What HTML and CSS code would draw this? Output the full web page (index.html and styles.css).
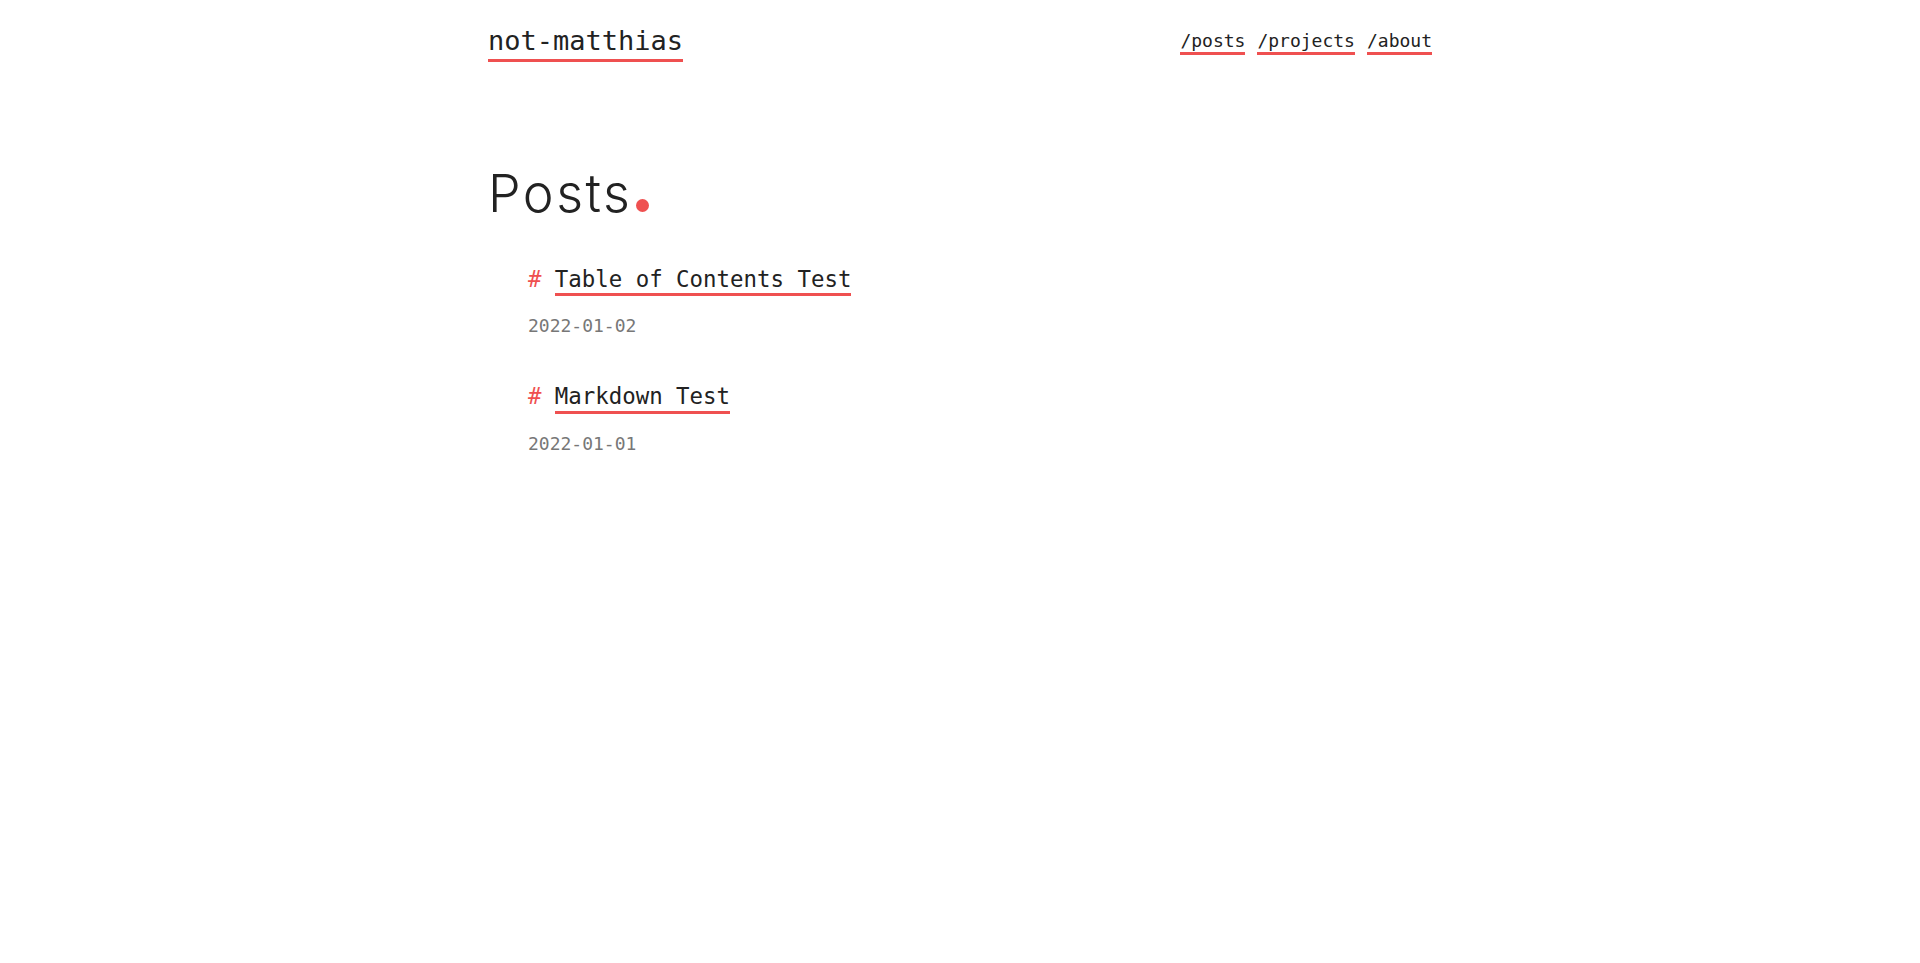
FILE: index.html
```html
<!DOCTYPE html>
<html lang="en">
<head>
<meta charset="utf-8">
<title>Posts | not-matthias</title>
<link rel="stylesheet" href="styles.css">
</head>
<body>
<div class="container">
  <header class="site-header">
    <a class="logo" href="#">not-matthias</a>
    <nav class="nav">
      <a href="#">/posts</a>
      <a href="#">/projects</a>
      <a href="#">/about</a>
    </nav>
  </header>
  <main class="main">
    <h1 class="page-title">Posts<span class="dot"></span></h1>
    <ul class="post-list">
      <li class="post">
        <div class="post-head"><a class="post-title" href="#">Table of Contents Test</a></div>
        <div class="post-date">2022-01-02</div>
      </li>
      <li class="post">
        <div class="post-head"><a class="post-title" href="#">Markdown Test</a></div>
        <div class="post-date">2022-01-01</div>
      </li>
    </ul>
  </main>
</div>
</body>
</html>
```
FILE: styles.css
```css
html, body {
  margin: 0;
  padding: 0;
  background: #ffffff;
}
body {
  font-family: "DejaVu Sans Mono", "Liberation Mono", monospace;
  color: #222222;
}
a {
  color: #222222;
  text-decoration: none;
}
.container {
  width: 944px;
  margin: 0 auto;
}
.site-header {
  display: flex;
  justify-content: space-between;
  align-items: flex-start;
  padding-top: 27px;
}
.logo {
  display: inline-block;
  font-size: 27px;
  line-height: 1;
  padding-bottom: 5px;
  border-bottom: 3px solid #ef5050;
}
.nav {
  display: flex;
  gap: 12px;
  padding-top: 5px;
}
.nav a {
  display: inline-block;
  font-size: 18px;
  line-height: 1;
  padding-bottom: 2px;
  border-bottom: 3px solid #ef5050;
}
.main {
  padding-top: 106px;
}
.page-title {
  margin: 0;
  font-family: Inter, "Noto Sans", sans-serif;
  font-weight: 300;
  font-size: 52px;
  letter-spacing: 2.5px;
  line-height: 1;
  color: #222222;
}
.dot {
  display: inline-block;
  width: 13px;
  height: 13px;
  border-radius: 50%;
  background: #ef5050;
  margin-left: 4px;
}
.post-list {
  list-style: none;
  margin: 47.5px 0 0;
  padding: 0 0 0 40px;
}
.post + .post {
  margin-top: 50.5px;
}
.post-head {
  font-size: 22.4px;
  line-height: 1;
}
.post-head::before {
  content: "#";
  display: inline-block;
  width: 26.8px;
  color: #ef5050;
}
.post-title {
  display: inline-block;
  font-size: 22.4px;
  line-height: 1;
  padding-bottom: 3px;
  border-bottom: 3px solid #ef5050;
}
.post-date {
  margin-top: 21px;
  font-size: 18px;
  line-height: 1;
  color: #777777;
}
```
